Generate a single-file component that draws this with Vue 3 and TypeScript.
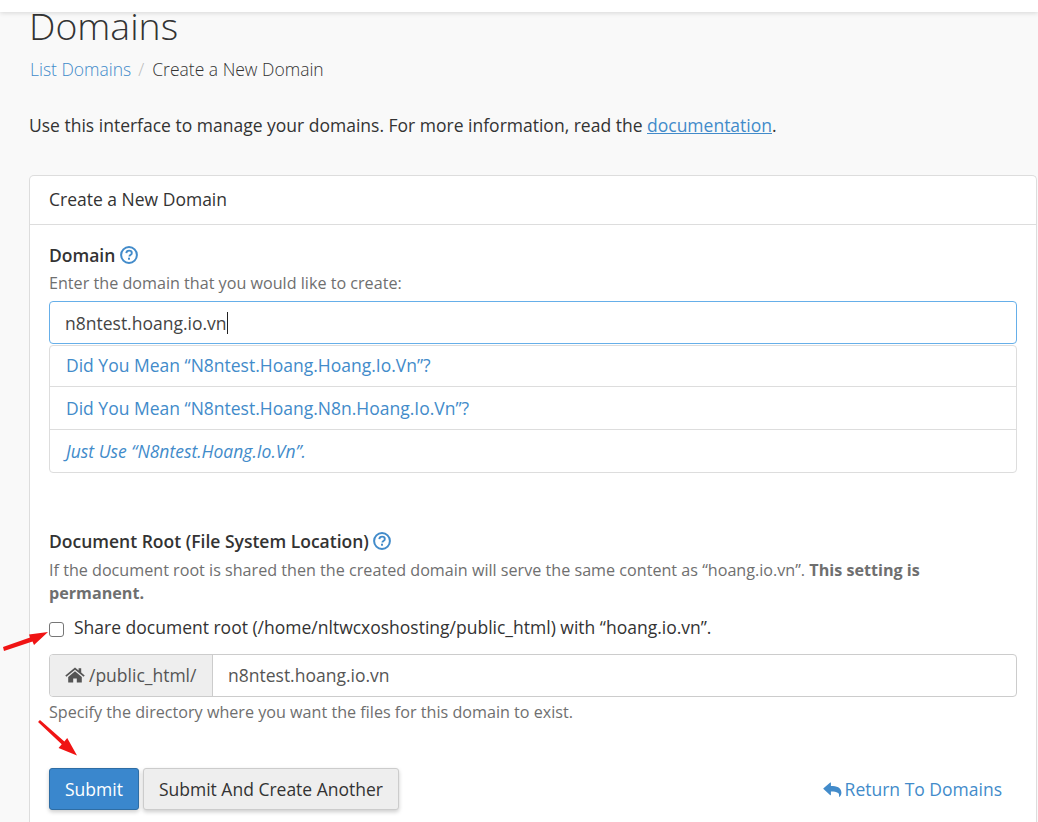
<script setup lang="ts">
const suggestions: string[] = [
  'Did You Mean “N8ntest.Hoang.Hoang.Io.Vn”?',
  'Did You Mean “N8ntest.Hoang.N8n.Hoang.Io.Vn”?',
]
</script>

<template>
  <div class="page">
    <header class="topbar"></header>
    <main class="content">
      <h1 class="title">Domains</h1>
      <nav class="crumbs">
        <a class="crumb-link">List Domains</a>
        <span class="crumb-sep">/</span>
        <span>Create a New Domain</span>
      </nav>
      <p class="intro">
        Use this interface to manage your domains. For more information, read the
        <a class="doc-link">documentation</a>.
      </p>

      <section class="card">
        <div class="card-head">Create a New Domain</div>
        <div class="card-body">
          <div class="label-row">
            <label class="label">Domain</label>
            <svg class="help" viewBox="0 0 18 18" aria-hidden="true">
              <circle cx="9" cy="9" r="7.9" fill="none" stroke="currentColor" stroke-width="2" />
              <path d="M6.300 7.100c.1-1.600 1.300-2.500 2.800-2.500 1.600 0 2.700 1 2.700 2.300 0 1-.5 1.600-1.400 2.100-.7.500-1 .8-1 1.600" fill="none" stroke="currentColor" stroke-width="1.900" />
              <rect x="8" y="11.700" width="2" height="2" fill="currentColor" />
            </svg>
          </div>
          <div class="hint">Enter the domain that you would like to create:</div>
          <div class="input focused">n8ntest.hoang.io.vn<span class="caret"></span></div>
          <ul class="suggest">
            <li v-for="s in suggestions" :key="s">{{ s }}</li>
            <li class="just-use">Just Use “N8ntest.Hoang.Io.Vn”.</li>
          </ul>

          <div class="label-row root-label">
            <label class="label">Document Root (File System Location)</label>
            <svg class="help" viewBox="0 0 18 18" aria-hidden="true">
              <circle cx="9" cy="9" r="7.9" fill="none" stroke="currentColor" stroke-width="2" />
              <path d="M6.300 7.100c.1-1.600 1.300-2.500 2.800-2.500 1.600 0 2.700 1 2.700 2.300 0 1-.5 1.600-1.400 2.100-.7.500-1 .8-1 1.600" fill="none" stroke="currentColor" stroke-width="1.900" />
              <rect x="8" y="11.700" width="2" height="2" fill="currentColor" />
            </svg>
          </div>
          <div class="hint wrap">
            If the document root is shared then the created domain will serve the same content as “hoang.io.vn”.
            <strong>This setting is permanent.</strong>
          </div>
          <div class="check-row">
            <span class="checkbox"></span>
            <span>Share document root (/home/nltwcxoshosting/public_html) with “hoang.io.vn”.</span>
          </div>
          <div class="group">
            <div class="addon">
              <svg class="home" viewBox="0 0 20 16" aria-hidden="true">
                <path d="M10 0.600 0.300 8.500l1.100 1.300L10 2.800l8.600 7 1.100-1.300-3.500-2.900V1.200h-2.600v2.300z" fill="currentColor" />
                <path d="M10 4.300 3.200 9.900v5.700h5v-4.200h3.600v4.200h5V9.900z" fill="currentColor" />
              </svg>
              <span>/public_html/</span>
            </div>
            <div class="group-value">n8ntest.hoang.io.vn</div>
          </div>
          <div class="hint below">Specify the directory where you want the files for this domain to exist.</div>
          <div class="actions">
            <button class="btn primary" type="button">Submit</button>
            <button class="btn" type="button">Submit And Create Another</button>
            <a class="back">
              <svg class="reply" viewBox="0 0 20 16" aria-hidden="true">
                <path d="M0.400 6.600 7.600 0.500c.3-.2.7 0 .7.4v3.400c6 .1 11.200 1.400 11.200 7.200 0 2-.9 3.400-2 4.300-.3.2-.7 0-.6-.4.9-3.800-1.700-5.200-8.600-5.300v3.600c0 .4-.4.6-.7.4L.4 7.500c-.3-.2-.3-.7 0-.9z" fill="currentColor" />
              </svg>
              <span>Return To Domains</span>
            </a>
          </div>
        </div>
      </section>
    </main>

    <svg class="arrow arrow-left" viewBox="0 0 47 32" aria-hidden="true">
      <path d="M1 27 28 17.500 27 14.500 46 12 32 25 30.500 21.500 2 31z" fill="#f01414" />
    </svg>
    <svg class="arrow arrow-down" viewBox="0 0 44 40" aria-hidden="true">
      <path d="M1 3.200 3 1l25.700 22.600 3-3.500L42 38.500 22.600 30.500l3.300-3.800z" fill="#f01414" />
    </svg>
  </div>
</template>

<style>
html,
body {
  margin: 0;
  background: #f9f9f9;
}
</style>

<style scoped>
.page {
  position: relative;
  width: 1038px;
  height: 822px;
  overflow: hidden;
  background: #f9f9f9;
  color: #333;
  font-family: "Open Sans", sans-serif;
  font-size: 17.5px;
}

.topbar {
  position: absolute;
  z-index: 2;
  top: 0;
  left: 0;
  right: 0;
  height: 12px;
  background: #fff;
  box-shadow: 0 1px 5px rgba(0, 0, 0, 0.14);
}

.content {
  padding-left: 29px;
  padding-right: 1px;
}

.title {
  margin: 0;
  height: 53px;
  font-size: 37.4px;
  font-weight: 300;
  line-height: 51px;
  color: #333;
}

.crumbs {
  margin-top: 5px;
  padding-left: 1px;
  font-weight: 300;
  line-height: 22px;
  color: #333;
}

.crumb-link {
  color: #428bca;
}

.crumb-sep {
  margin: 0 8px 0 7px;
  color: #bbb;
}

.intro {
  margin: 33px 0 0;
  line-height: 24px;
  color: #333;
}

.doc-link {
  color: #428bca;
  text-decoration: underline;
}

.card {
  margin-top: 38px;
  background: #fff;
  border: 1px solid #ddd;
  border-bottom: 0;
  border-radius: 5px 5px 0 0;
  height: 700px;
}

.card-head {
  box-sizing: border-box;
  height: 49px;
  padding-left: 19px;
  line-height: 46px;
  border-bottom: 1px solid #ddd;
}

.card-body {
  padding: 18px 19px 0;
}

.label-row {
  display: flex;
  align-items: center;
  gap: 5px;
  height: 24px;
}

.label {
  font-weight: 600;
  line-height: 24px;
}

.help {
  width: 18px;
  height: 18px;
  color: #428bca;
}

.hint {
  margin-top: 5px;
  font-size: 16.15px;
  line-height: 23px;
  color: #6f6f6f;
}

.input {
  display: flex;
  align-items: center;
  box-sizing: border-box;
  height: 43px;
  margin-top: 6px;
  padding-left: 15px;
  background: #fff;
  border: 1px solid #66afe9;
  border-radius: 4px;
  color: #444;
}

.caret {
  width: 1px;
  height: 22px;
  background: #222;
}

.suggest {
  margin: 1px 0 0;
  padding: 0;
  list-style: none;
  border: 1px solid #ddd;
  border-radius: 4px;
  color: #428bca;
}

.suggest li {
  box-sizing: border-box;
  height: 43px;
  padding-left: 16px;
  line-height: 43px;
  border-bottom: 1px solid #ddd;
}

.suggest li:first-child {
  height: 41px;
  line-height: 38px;
}

.suggest li:last-child {
  height: 42px;
  border-bottom: 0;
}

.just-use {
  font-style: italic;
}

.root-label {
  margin-top: 56px;
  gap: 4px;
}

.wrap {
  margin-top: 6px;
}

.wrap strong {
  font-weight: 700;
}

.check-row {
  display: flex;
  align-items: center;
  gap: 10px;
  height: 24px;
  margin-top: 10px;
}

.checkbox {
  box-sizing: border-box;
  width: 15px;
  height: 15px;
  margin-top: 4px;
  background: #fff;
  border: 1px solid #767676;
  border-radius: 3px;
}

.group {
  display: flex;
  box-sizing: border-box;
  height: 43px;
  margin-top: 15px;
  background: #fff;
  border: 1px solid #ccc;
  border-radius: 4px;
  color: #555;
}

.addon {
  display: flex;
  align-items: center;
  gap: 4px;
  box-sizing: border-box;
  width: 163px;
  padding: 0 0 2px 15px;
  background: #eee;
  border-right: 1px solid #ccc;
  border-radius: 3px 0 0 3px;
}

.home {
  flex: none;
  width: 20px;
  height: 16px;
}

.group-value {
  display: flex;
  align-items: center;
  padding: 0 0 2px 15px;
}

.below {
  margin-top: 4px;
}

.actions {
  display: flex;
  align-items: center;
  gap: 4px;
  margin-top: 44px;
}

.btn {
  box-sizing: border-box;
  height: 42px;
  padding: 0 15px;
  font-family: inherit;
  font-size: 17.5px;
  color: #333;
  background: #eee;
  border: 1px solid #ccc;
  border-radius: 3px;
  box-shadow: 0 2px 4px rgba(0, 0, 0, 0.2);
}

.primary {
  color: #fff;
  background: #3a87cd;
  border-color: #2e6da4;
}

.back {
  display: flex;
  align-items: center;
  gap: 3px;
  margin-left: auto;
  margin-right: 15px;
  color: #428bca;
}

.reply {
  flex: none;
  width: 19px;
  height: 15px;
}

.arrow {
  position: absolute;
  z-index: 1;
}

.arrow-left {
  left: 2px;
  top: 620px;
  width: 47px;
  height: 32px;
}

.arrow-down {
  left: 37px;
  top: 719px;
  width: 42px;
  height: 38px;
}
</style>
